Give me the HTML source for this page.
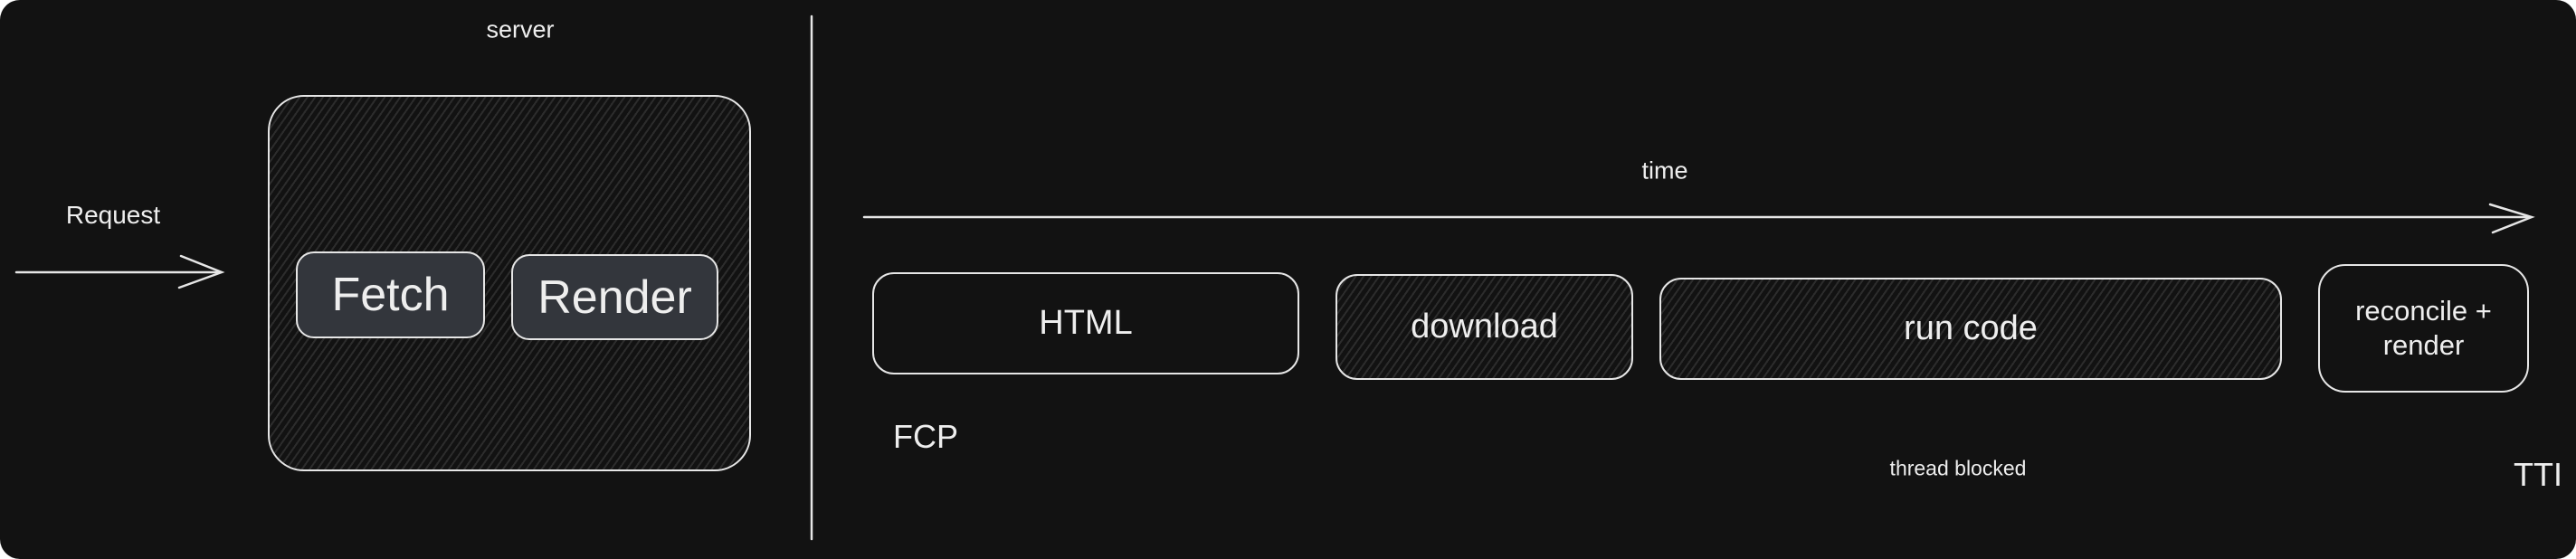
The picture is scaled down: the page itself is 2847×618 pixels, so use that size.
<!DOCTYPE html>
<html><head><meta charset="utf-8"><style>
html,body{margin:0;padding:0;background:#fff;}
#c{position:relative;width:2847px;height:618px;background:#121212;border-radius:22px;overflow:hidden;font-family:"Liberation Sans",sans-serif;color:#eee;}
.t{position:absolute;white-space:nowrap;transform:translate(-50%,-50%);}
.b{position:absolute;box-sizing:border-box;border:2.5px solid #e6e6e6;display:flex;align-items:center;justify-content:center;text-align:center;}
.h{background:repeating-linear-gradient(-55deg,#121212 0 5px,#2c2c2c 5px 7px);}
</style></head><body><div id="c">
<div class="t" style="left:575px;top:33px;font-size:27px">server</div>
<div class="t" style="left:125px;top:238px;font-size:28px">Request</div>
<svg style="position:absolute;left:0;top:0" width="2847" height="618">
<g stroke="#e6e6e6" stroke-width="2.5" fill="none" stroke-linecap="round">
<line x1="18" y1="301" x2="244" y2="301"/>
<path d="M200 283 L245 301 L198 318"/>
<line x1="897" y1="18" x2="897" y2="596"/>
<line x1="955" y1="240" x2="2797" y2="240"/>
<path d="M2752 226 L2798 240 L2755 257"/>
</g></svg>
<div class="b h" style="left:296px;top:105px;width:534px;height:416px;border-radius:40px"></div>
<div class="b" style="left:327px;top:278px;width:209px;height:96px;border-radius:20px;background:#33363c;font-size:52px">Fetch</div>
<div class="b" style="left:565px;top:281px;width:229px;height:95px;border-radius:20px;background:#33363c;font-size:52px">Render</div>
<div class="t" style="left:1840px;top:189px;font-size:27px">time</div>
<div class="b" style="left:964px;top:301px;width:472px;height:113px;border-radius:24px;font-size:38px">HTML</div>
<div class="b h" style="left:1476px;top:303px;width:329px;height:117px;border-radius:24px;font-size:38px">download</div>
<div class="b h" style="left:1834px;top:307px;width:688px;height:113px;border-radius:24px;font-size:38px">run code</div>
<div class="b" style="left:2562px;top:292px;width:233px;height:142px;border-radius:30px;font-size:31px;line-height:38px">reconcile +<br>render</div>
<div class="t" style="left:1023px;top:483px;font-size:36px">FCP</div>
<div class="t" style="left:2164px;top:518px;font-size:23px">thread blocked</div>
<div class="t" style="left:2805px;top:525px;font-size:36px">TTI</div>
</div></body></html>
